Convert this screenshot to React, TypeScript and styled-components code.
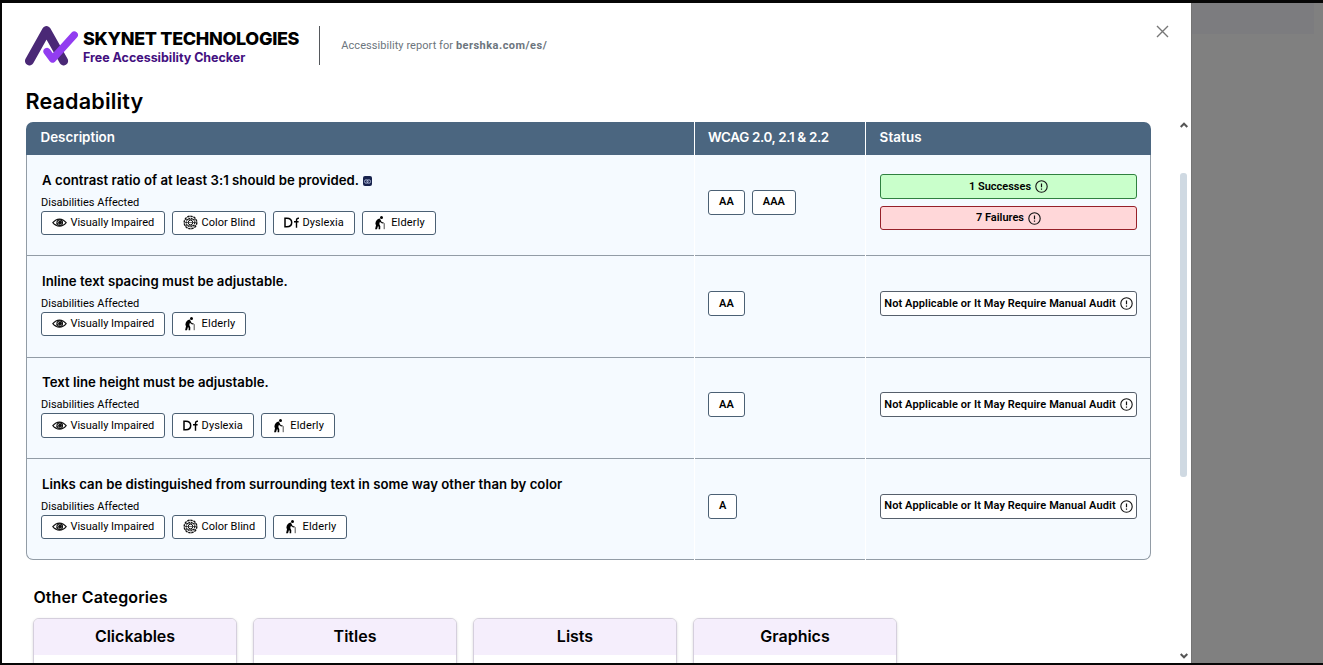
import React from "react";
import styled, { createGlobalStyle } from "styled-components";

const GlobalStyle = createGlobalStyle`
  *, *::before, *::after { box-sizing: border-box; }
  body { margin: 0; background: #808080; font-family: Roboto, "Liberation Sans", sans-serif; color: #000; }
`;

const Screen = styled.div`
  width: 1323px;
  height: 665px;
  display: flex;
  overflow: hidden;
  background: #808080;
  border: solid #060606;
  border-width: 3px 0 2px 2px;
  position: relative;
`;

const Panel = styled.div`
  width: 1189px;
  height: 660px;
  flex: none;
  display: flex;
  flex-direction: column;
  background: #fff;
`;

const Backdrop = styled.div`
  flex: 1;
  border-left: 1px solid #747474;
`;

const BackdropBar = styled.div`
  width: 122px;
  height: 31px;
  background: #7c7c7f;
`;

const Handle = styled.div`
  position: absolute;
  left: 565px;
  bottom: -2px;
  width: 48px;
  height: 2px;
  background: #3a3a3a;
`;

const Header = styled.header`
  height: 84px;
  flex: none;
  display: flex;
  align-items: flex-start;
  padding: 22px 22px 0 22px;
`;

const Brand = styled.div`
  display: flex;
  width: 296px;
  height: 39px;
  margin-top: 1px;
  border-right: 1px solid #55585c;

  > svg { margin-top: -1px; }
`;

const BrandWords = styled.div`
  display: flex;
  flex-direction: column;
  padding-left: 4px;
  font-family: Inter, sans-serif;
  white-space: nowrap;
`;

const BrandName = styled.span`
  font-size: 18px;
  line-height: 22px;
  font-weight: 800;
  letter-spacing: -0.33px;
  color: #000;
  margin-top: 2px;
`;

const BrandTag = styled.span`
  font-size: 12.5px;
  line-height: 16px;
  font-weight: 700;
  letter-spacing: -0.03px;
  color: #43107f;
`;

const ReportFor = styled.p`
  margin: 13px 0 0 21.3px;
  font-size: 11px;
  line-height: 16px;
  color: #6c757d;
  letter-spacing: 0.06px;
  white-space: nowrap;

  strong { font-weight: 700; letter-spacing: 0.48px; }
`;

const CloseButton = styled.button`
  margin: 0 0 0 auto;
  padding: 0;
  border: 0;
  background: none;
  display: flex;
  width: 13px;
  height: 13px;
`;

const Body = styled.div`
  flex: 1;
  min-height: 0;
  display: flex;
  overflow: hidden;
`;

const Content = styled.main`
  flex: 1;
  padding-left: 24px;
`;

const PageTitle = styled.h1`
  margin: 0 0 7px -0.5px;
  font-family: Inter, sans-serif;
  font-size: 21.6px;
  line-height: 28px;
  font-weight: 600;
  letter-spacing: 0.14px;
`;

const Table = styled.section`
  width: 1125px;
`;

const columns = "669px 171px 285px";

const HeadRow = styled.div`
  display: grid;
  grid-template-columns: ${columns};
  height: 33px;
  border-radius: 7px 7px 0 0;
  overflow: hidden;
`;

const HeadCell = styled.div<{ $track: number }>`
  padding: 0 0 4px 13px;
  display: flex;
  align-items: center;
  background: #4b6680;
  color: #fff;
  font-family: Inter, sans-serif;
  font-size: 13.4px;
  font-weight: 600;
  letter-spacing: ${(p) => p.$track}px;
  border-right: 1px solid #fff;
  &:last-child { border-right: 0; padding-left: 13.6px; }
  &:first-child { padding-left: 14.6px; }
`;

const Row = styled.div`
  display: grid;
  grid-template-columns: ${columns};
  height: 101.33px;
`;

const Cell = styled.div<{ $top: number; $left: number }>`
  padding: ${(p) => p.$top}px 0 0 ${(p) => p.$left}px;
  background: #f5faff;
  border-bottom: 1px solid #929ca6;
  box-shadow: 1px 0 0 #fff;
  margin-right: 1px;

  &:first-child { border-left: 1px solid #929ca6; }
  &:last-child { border-right: 1px solid #929ca6; margin-right: 0; box-shadow: none; }
  ${Row}:last-child &:first-child { border-bottom-left-radius: 7px; }
  ${Row}:last-child &:last-child { border-bottom-right-radius: 7px; }
`;

const RuleTitle = styled.h2`
  margin: 0;
  padding-left: 1px;
  height: 20px;
  display: flex;
  align-items: center;
  gap: 4px;
  font-family: Inter, sans-serif;
  font-size: 13.2px;
  font-weight: 600;
  letter-spacing: 0.03px;
  white-space: nowrap;
`;

const LinkChip = styled.span`
  width: 9px;
  height: 10px;
  margin-top: 3px;
  border-radius: 2px;
  background: #17224d;
  display: flex;
  align-items: center;
  justify-content: center;
`;

const AffectedLabel = styled.div`
  margin: 5px 0 1px;
  font-size: 11px;
  line-height: 15px;
`;

const TagList = styled.div`
  display: flex;
  gap: 7px;
`;

const Tag = styled.span<{ $track: number }>`
  height: 24.4px;
  padding: 0 10px 1px;
  display: flex;
  align-items: center;
  gap: 3.4px;
  border: 1px solid #4b6074;
  border-radius: 3px;
  background: #fff;
  font-size: 11px;
  letter-spacing: ${(p) => p.$track}px;
  white-space: nowrap;
`;

const Levels = styled.div`
  display: flex;
  gap: 6.8px;
`;

const Level = styled.span`
  height: 25px;
  padding: 0 10px 1px;
  display: flex;
  align-items: center;
  border: 1px solid #4b6074;
  border-radius: 3px;
  background: #fff;
  font-size: 11px;
  font-weight: 600;
  letter-spacing: 0.1px;
`;

const tones = {
  pass: { border: "#2f8040", fill: "#c9ffcb" },
  fail: { border: "#962029", fill: "#ffd7d9" },
  none: { border: "#565f6b", fill: "#fff" },
};
type Tone = keyof typeof tones;

const StatusStack = styled.div`
  width: 257px;
  display: flex;
  flex-direction: column;
  gap: 7px;
`;

const StatusPill = styled.div<{ $tone: Tone }>`
  height: ${(p) => (p.$tone === "fail" ? 24 : 25)}px;
  display: flex;
  align-items: center;
  justify-content: center;
  gap: 4px;
  padding-bottom: 1px;
  border: 1px solid ${(p) => tones[p.$tone].border};
  border-radius: 3px;
  background: ${(p) => tones[p.$tone].fill};
  font-size: 11px;
  font-weight: 600;
  letter-spacing: ${(p) => (p.$tone === "none" ? 0.09 : 0)}px;
  white-space: nowrap;

  svg { margin-top: 1px; }
`;

const SectionTitle = styled.h3`
  margin: 26px 0 0 7.4px;
  font-family: Inter, sans-serif;
  font-size: 16px;
  line-height: 22px;
  font-weight: 600;
  letter-spacing: 0.12px;
`;

const Cards = styled.div`
  display: flex;
  gap: 16px;
  margin: 10px 0 0 7px;
`;

const Card = styled.article`
  width: 204px;
  height: 120px;
  border: 1px solid #d5cfdd;
  border-radius: 6px;
  overflow: hidden;
  background: #fff;
  box-shadow: 0 1px 3px rgba(0, 0, 0, 0.16);
`;

const CardHead = styled.div`
  height: 36px;
  display: flex;
  align-items: center;
  justify-content: center;
  padding: 0 0 3px;
  background: #f5eefc;
  font-family: Inter, sans-serif;
  font-size: 16px;
  font-weight: 600;
`;

const ScrollRail = styled.div`
  width: 15px;
  padding: 35px 3.5px 4px 0;
  display: flex;
  flex-direction: column;
  align-items: flex-end;
  justify-content: space-between;
`;

const Thumb = styled.div`
  width: 7px;
  height: 304px;
  margin: 45px 0.5px auto 0;
  border-radius: 3px;
  background: #cfd9e2;
`;

const LogoMark = () => (
  <svg width="55" height="41" viewBox="0 0 55 41" fill="none" strokeLinecap="round" strokeLinejoin="round">
    <path d="M5.4 36 22.5 5.5 39.7 36" stroke="#4a2876" strokeWidth="8.8" />
    <path d="M23 26.5 28.6 34 50.3 10" stroke="#923df0" strokeWidth="7.2" />
  </svg>
);

const CloseIcon = () => (
  <svg width="13" height="13" viewBox="0 0 13 13" stroke="#777" strokeWidth="1.4">
    <path d="M1 1 12 12M12 1 1 12" />
  </svg>
);

const Chevron = ({ down }: { down?: boolean }) => (
  <svg width="8" height="6" viewBox="0 0 8 6" fill="none" stroke="#555" strokeWidth="2">
    <path d={down ? "M.7 1 4 4.3 7.3 1" : "M.7 5 4 1.7 7.3 5"} />
  </svg>
);

const InfoIcon = () => (
  <svg width="13" height="13" viewBox="0 0 13 13" fill="none" stroke="#111" strokeWidth="1.1">
    <circle cx="6.5" cy="6.5" r="5.7" />
    <path d="M6.5 3.4v3.8M6.5 8.4v1.4" strokeWidth="1.2" />
  </svg>
);

const EyeIcon = () => (
  <svg width="15" height="15" viewBox="0 0 15 15" fill="none" stroke="#111" strokeWidth="1.1">
    <path d="M.8 7.7C3 5 5.2 4.100 7.5 4.100s4.500.9 6.700 3.600c-2.200 2.700-4.400 3.600-6.700 3.600S3 10.400.8 7.700Z" />
    <circle cx="7.7" cy="7.7" r="2.8" />
    <circle cx="8" cy="7.7" r="1.3" fill="#111" />
    <path d="M3.2 9.8 6.4 7.8M5.8 10.8 11 5.6" strokeWidth=".8" />
  </svg>
);

const ColorIcon = () => (
  <svg width="15" height="15" viewBox="0 0 15 15" fill="none" stroke="#111">
    <circle cx="7.5" cy="7.5" r="6.3" strokeWidth="1.4" strokeDasharray="2.4 .8" />
    <circle cx="7.5" cy="7.5" r="4.3" strokeWidth="1.1" strokeDasharray="1.9 .6" />
    <circle cx="7.5" cy="7.5" r="2.3" strokeWidth="1" />
    <path d="M2 4.5h11M1.5 7.5h12M2 10.5h11" strokeWidth=".6" />
  </svg>
);

const DyslexiaIcon = () => (
  <svg width="15" height="15" viewBox="0 0 15 15" fill="none" stroke="#000" strokeWidth="1.5">
    <path d="M1 3.3v8.4h1.9c3 0 4.8-1.500 4.800-4.200S5.900 3.300 2.900 3.300Z" />
    <path d="M15 3.300c-1.600-.3-2.500.4-2.500 2v7.400M10 6.700h4.600" strokeWidth="1.4" />
  </svg>
);

const ElderlyIcon = () => (
  <svg width="15" height="15" viewBox="0 0 15 15" fill="none">
    <circle cx="8.5" cy="2.6" r="1.5" fill="#000" />
    <path d="M6.800 3.600C4.200 4 2.500 6.100 2.400 8.800l.6 1.400-.9 4.100h1.900l1-3.300.7 1-.1 2.300h1.600l.1-3.100-1-2.100.6-2.300 1.100 1 1.900.5.200-.9-1.600-.6-.9-1.800Z" fill="#000" />
    <path d="M9.2 8.400c.1-.8 2-.9 2 .2v5.600" stroke="#222" strokeWidth=".8" />
  </svg>
);

const LinkIcon = () => (
  <svg width="7" height="5" viewBox="0 0 7 5" fill="none" stroke="#c3cbea" strokeWidth=".8">
    <rect x=".5" y=".8" width="3.6" height="3.4" rx="1.5" />
    <rect x="2.9" y=".8" width="3.6" height="3.4" rx="1.5" />
  </svg>
);

const disabilities = {
  vision: { label: "Visually Impaired", Icon: EyeIcon, track: 0 },
  color: { label: "Color Blind", Icon: ColorIcon, track: 0.02 },
  dyslexia: { label: "Dyslexia", Icon: DyslexiaIcon, track: 0.06 },
  elderly: { label: "Elderly", Icon: ElderlyIcon, track: 0.18 },
};

type Rule = {
  title: string;
  link?: boolean;
  affected: (keyof typeof disabilities)[];
  levels: string[];
  status: { tone: Tone; text: string }[];
};

const manual: Rule["status"] = [{ tone: "none", text: "Not Applicable or It May Require Manual Audit" }];

const rules: Rule[] = [
  {
    title: "A contrast ratio of at least 3:1 should be provided.",
    link: true,
    affected: ["vision", "color", "dyslexia", "elderly"],
    levels: ["AA", "AAA"],
    status: [
      { tone: "pass", text: "1 Successes" },
      { tone: "fail", text: "7 Failures" },
    ],
  },
  { title: "Inline text spacing must be adjustable.", affected: ["vision", "elderly"], levels: ["AA"], status: manual },
  { title: "Text line height must be adjustable.", affected: ["vision", "dyslexia", "elderly"], levels: ["AA"], status: manual },
  {
    title: "Links can be distinguished from surrounding text in some way other than by color",
    affected: ["vision", "color", "elderly"],
    levels: ["A"],
    status: manual,
  },
];

const RuleRow = ({ rule }: { rule: Rule }) => (
  <Row>
    <Cell $top={14.7} $left={14}>
      <RuleTitle>
        {rule.title}
        {rule.link && <LinkChip><LinkIcon /></LinkChip>}
      </RuleTitle>
      <AffectedLabel>Disabilities Affected</AffectedLabel>
      <TagList>
        {rule.affected.map((key) => {
          const { label, Icon, track } = disabilities[key];
          return <Tag key={key} $track={track}><Icon />{label}</Tag>;
        })}
      </TagList>
    </Cell>
    <Cell $top={34.8} $left={13}>
      <Levels>{rule.levels.map((l) => <Level key={l}>{l}</Level>)}</Levels>
    </Cell>
    <Cell $top={rule.status.length > 1 ? 19 : 34.8} $left={14}>
      <StatusStack>
        {rule.status.map((s) => (
          <StatusPill key={s.text} $tone={s.tone}>{s.text}<InfoIcon /></StatusPill>
        ))}
      </StatusStack>
    </Cell>
  </Row>
);

export default function App() {
  return (
    <>
      <GlobalStyle />
      <Screen>
        <Panel>
          <Header>
            <Brand>
              <LogoMark />
              <BrandWords>
                <BrandName>SKYNET TECHNOLOGIES</BrandName>
                <BrandTag>Free Accessibility Checker</BrandTag>
              </BrandWords>
            </Brand>
            <ReportFor>Accessibility report for <strong>bershka.com/es/</strong></ReportFor>
            <CloseButton aria-label="Close"><CloseIcon /></CloseButton>
          </Header>
          <Body>
            <Content>
              <PageTitle>Readability</PageTitle>
              <Table>
                <HeadRow>
                  <HeadCell $track={-0.03}>Description</HeadCell>
                  <HeadCell $track={-0.34}>WCAG 2.0, 2.1 &amp; 2.2</HeadCell>
                  <HeadCell $track={0.1}>Status</HeadCell>
                </HeadRow>
                <div>{rules.map((r) => <RuleRow key={r.title} rule={r} />)}</div>
              </Table>
              <SectionTitle>Other Categories</SectionTitle>
              <Cards>
                {["Clickables", "Titles", "Lists", "Graphics"].map((name) => (
                  <Card key={name}><CardHead>{name}</CardHead></Card>
                ))}
              </Cards>
            </Content>
            <ScrollRail>
              <Chevron />
              <Thumb />
              <Chevron down />
            </ScrollRail>
          </Body>
        </Panel>
        <Backdrop><BackdropBar /></Backdrop>
        <Handle />
      </Screen>
    </>
  );
}
